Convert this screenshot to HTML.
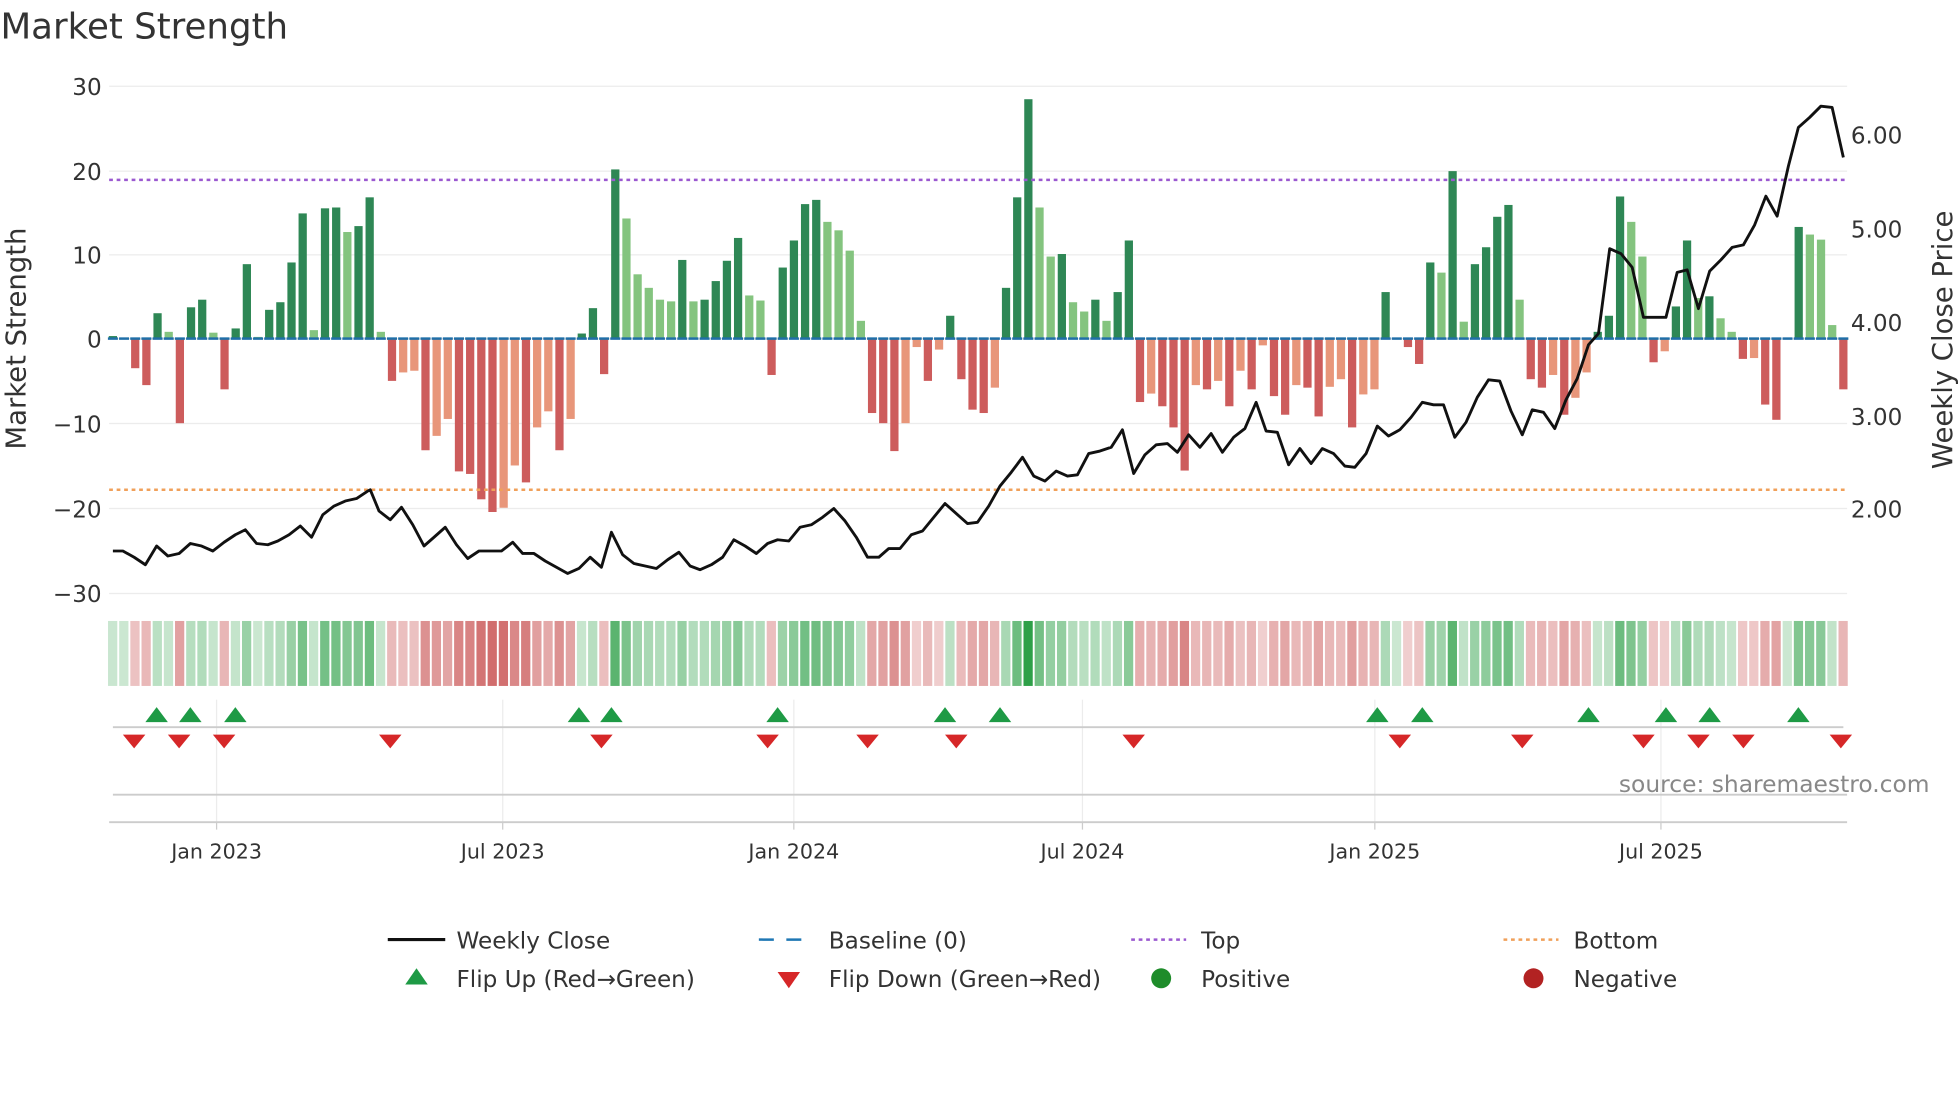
<!DOCTYPE html>
<html><head><meta charset="utf-8"><style>
html,body{margin:0;padding:0;background:#fff;}
svg{display:block;font-family:"DejaVu Sans","Liberation Sans",sans-serif;}
</style></head><body>
<svg id="s" width="1960" height="1102" viewBox="0 0 1568 882" xmlns="http://www.w3.org/2000/svg">
<rect width="1568" height="882" fill="#fff"/>
<text x="0" y="31" font-size="28.5" fill="#333">Market Strength</text>
<g id="grid" stroke="#ececec" stroke-width="1"></g>
<g id="bars"></g>
<g id="strip"></g>
<line x1="87" y1="144" x2="1478" y2="144" stroke="#9b59d0" stroke-width="2" stroke-dasharray="3,3"/>
<line x1="87" y1="392" x2="1478" y2="392" stroke="#f0a05a" stroke-width="2" stroke-dasharray="3,3"/>
<g id="base"></g>
<polyline id="price" fill="none" stroke="#111" stroke-width="2.3" stroke-linejoin="round"/>
<g font-size="18.5" fill="#333" text-anchor="end">
<text x="81" y="76">30</text><text x="81" y="144">20</text><text x="81" y="211">10</text><text x="81" y="278">0</text>
<text x="81" y="346">−10</text><text x="81" y="414">−20</text><text x="81" y="482">−30</text>
</g>
<g font-size="18.5" fill="#333">
<text x="1481" y="115">6.00</text><text x="1481" y="190">5.00</text><text x="1481" y="265">4.00</text><text x="1481" y="340">3.00</text><text x="1481" y="414">2.00</text>
</g>
<text transform="translate(20,271) rotate(-90)" font-size="22" fill="#333" text-anchor="middle">Market Strength</text>
<text transform="translate(1562,272) rotate(-90)" font-size="22" fill="#333" text-anchor="middle">Weekly Close Price</text>
<line x1="90" y1="582" x2="1475" y2="582" stroke="#ccc" stroke-width="1.5"/>
<line x1="90" y1="636" x2="1478" y2="636" stroke="#ccc" stroke-width="1.5"/>
<line x1="87" y1="658" x2="1478" y2="658" stroke="#ccc" stroke-width="1.5"/>
<g id="flips"></g>
<text x="1544" y="634" font-size="18.7" fill="#888" text-anchor="end">source: sharemaestro.com</text>
<g font-size="16.5" fill="#333" text-anchor="middle">
<text x="173" y="687">Jan 2023</text><text x="402" y="687">Jul 2023</text><text x="635" y="687">Jan 2024</text>
<text x="866" y="687">Jul 2024</text><text x="1100" y="687">Jan 2025</text><text x="1329" y="687">Jul 2025</text>
</g>
<g stroke="#ccc"><line x1="173" y1="658" x2="173" y2="664"/><line x1="402" y1="658" x2="402" y2="664"/><line x1="635" y1="658" x2="635" y2="664"/><line x1="866" y1="658" x2="866" y2="664"/><line x1="1100" y1="658" x2="1100" y2="664"/><line x1="1329" y1="658" x2="1329" y2="664"/></g>
<g font-size="18.5" fill="#333">
<line x1="310" y1="752" x2="356" y2="752" stroke="#111" stroke-width="2.5"/><text x="365" y="759">Weekly Close</text>
<line x1="607" y1="752" x2="651" y2="752" stroke="#1f77b4" stroke-width="2" stroke-dasharray="12,10"/><text x="663" y="759">Baseline (0)</text>
<line x1="905" y1="752" x2="949" y2="752" stroke="#9b59d0" stroke-width="2" stroke-dasharray="3,3"/><text x="961" y="759">Top</text>
<line x1="1203" y1="752" x2="1247" y2="752" stroke="#f0a05a" stroke-width="2" stroke-dasharray="3,3"/><text x="1259" y="759">Bottom</text>
<polygon points="324,788 342,788 333,775" fill="#1e9a45"/><text x="365" y="790">Flip Up (Red→Green)</text>
<polygon points="622,778 640,778 631,791" fill="#d62728"/><text x="663" y="790">Flip Down (Green→Red)</text>
<circle cx="929" cy="783" r="8" fill="#1e8c2a"/><text x="961" y="790">Positive</text>
<circle cx="1227" cy="783" r="8" fill="#b22222"/><text x="1259" y="790">Negative</text>
</g>
</svg>
<script>
var NS="http://www.w3.org/2000/svg";
function el(p,t,a){var e=document.createElementNS(NS,t);for(var k in a)e.setAttribute(k,a[k]);p.appendChild(e);return e;}
var vals=[0.3,0,-3.5,-5.5,3,0.8,-10,3.7,4.6,0.7,-6,1.2,8.8,0.2,3.4,4.3,9,14.8,1,15.4,15.5,12.6,13.3,16.7,0.8,-5,-4,-3.8,-13.2,-11.5,-9.5,-15.7,-16,-19,-20.5,-20,-15,-17,-10.5,-8.6,-13.2,-9.5,0.6,3.6,-4.2,20,14.2,7.6,6,4.6,4.4,9.3,4.4,4.6,6.8,9.2,11.9,5.1,4.5,-4.3,8.4,11.6,15.9,16.4,13.8,12.8,10.4,2.1,-8.8,-10,-13.3,-10,-1,-5,-1.3,2.7,-4.8,-8.4,-8.8,-5.8,6,16.7,28.3,15.5,9.7,10,4.3,3.2,4.6,2.1,5.5,11.6,-7.5,-6.5,-8,-10.5,-15.6,-5.5,-6,-5,-8,-3.8,-6,-0.8,-6.8,-9,-5.5,-5.8,-9.2,-5.7,-4.8,-10.5,-6.6,-6,5.5,0,-1,-3,9,7.8,19.8,2,8.8,10.8,14.4,15.8,4.6,-4.8,-5.8,-4.3,-9,-7,-4,0.8,2.7,16.8,13.8,9.7,-2.8,-1.5,3.8,11.6,4.8,5,2.4,0.8,-2.4,-2.3,-7.8,-9.6,0,13.2,12.3,11.7,1.6,-6];
var n=vals.length, x0=90, dx=(1475-90)/(n-1);
var g=document.getElementById('grid');
[69,137,204,271,339,407,475].forEach(function(y){el(g,'line',{x1:87,x2:1478,y1:y,y2:y});});
[173,402,635,866,1100,1329].forEach(function(x){el(g,'line',{x1:x,x2:x,y1:560,y2:658});});
var b=document.getElementById('bars'),s=document.getElementById('strip'),bs=document.getElementById('base');
for(var i=0;i<n;i++){
 var v=vals[i],x=x0+i*dx,prev=i?vals[i-1]:v,c;
 if(v>=0) c=(v>=prev)?'#2e8755':'#84c47f'; else c=(v<=prev)?'#cd5c5c':'#e8967a';
 var y=271-v*6.77;
 if(Math.abs(v)>0.05) el(b,'rect',{x:x-3.3,y:Math.min(y,271),width:6.6,height:Math.abs(v*6.77),fill:c});
 el(bs,'line',{x1:x-4,x2:x+4,y1:271,y2:271,stroke:'#1f6fa8','stroke-width':2});
 var sc;
 if(v>=0){var t=Math.min(1,v/28);sc='rgba(46,160,72,'+(0.25+0.75*t)+')';}
 else{var t=Math.min(1,(-v)/21);sc='rgba(200,80,80,'+(0.25+0.6*t)+')';}
 el(s,'rect',{x:x-3.9,y:497,width:7.4,height:52,fill:sc});
}
var P=[[90,441],[98,441],[107,446],[116,452],[125,437],[134,445],[143,443],[152,435],[161,437],[170,441],[179,434],[188,428],[196,424],[205,435],[214,436],[222,433],[231,428],[240,421],[249,430],[258,412],[267,405],[276,401],[285,399],[294,393],[296,392],[303,409],[312,416],[321,406],[330,420],[339,437],[347,430],[356,422],[365,436],[374,447],[383,441],[392,441],[401,441],[410,434],[418,443],[427,443],[436,449],[445,454],[454,459],[463,455],[472,446],[481,454],[489,426],[498,444],[507,451],[516,453],[525,455],[534,448],[543,442],[552,453],[560,456],[569,452],[578,446],[587,432],[596,437],[605,443],[614,435],[622,432],[631,433],[640,422],[649,420],[658,414],[667,407],[676,417],[685,430],[694,446],[703,446],[711,439],[720,439],[729,428],[738,425],[747,414],[756,403],[765,411],[774,419],[782,418],[791,405],[800,389],[809,378],[818,366],[827,381],[836,385],[845,377],[854,381],[862,380],[871,363],[880,361],[889,358],[898,344],[907,379],[916,364],[925,356],[934,355],[942,362],[951,348],[960,358],[969,347],[978,362],[987,350],[996,343],[1005,322],[1013,345],[1022,346],[1031,372],[1040,359],[1049,371],[1058,359],[1067,363],[1076,373],[1084,374],[1093,363],[1102,341],[1111,349],[1120,344],[1129,334],[1138,322],[1147,324],[1155,324],[1164,350],[1173,338],[1182,318],[1191,304],[1200,305],[1209,329],[1218,348],[1226,328],[1235,330],[1244,343],[1253,320],[1262,303],[1271,276],[1279,267],[1288,199],[1297,203],[1306,214],[1315,254],[1324,254],[1333,254],[1342,218],[1350,216],[1359,247],[1368,217],[1377,208],[1386,198],[1395,196],[1404,180],[1413,157],[1422,173],[1431,133],[1439,102],[1448,94],[1457,85],[1466,86],[1475,126]];
document.getElementById('price').setAttribute('points',P.map(function(p){return p.join(',')}).join(' '));
var f=document.getElementById('flips');
[125,152,188,463,489,622,756,800,1102,1138,1271,1333,1368,1439].forEach(function(x){el(f,'polygon',{points:(x-9)+',578 '+(x+9)+',578 '+x+',566',fill:'#1e9a45'});});
[107,143,179,312,481,614,694,765,907,1120,1218,1315,1359,1395,1473].forEach(function(x){el(f,'polygon',{points:(x-9)+',588 '+(x+9)+',588 '+x+',599',fill:'#d62728'});});
</script>
</body></html>
